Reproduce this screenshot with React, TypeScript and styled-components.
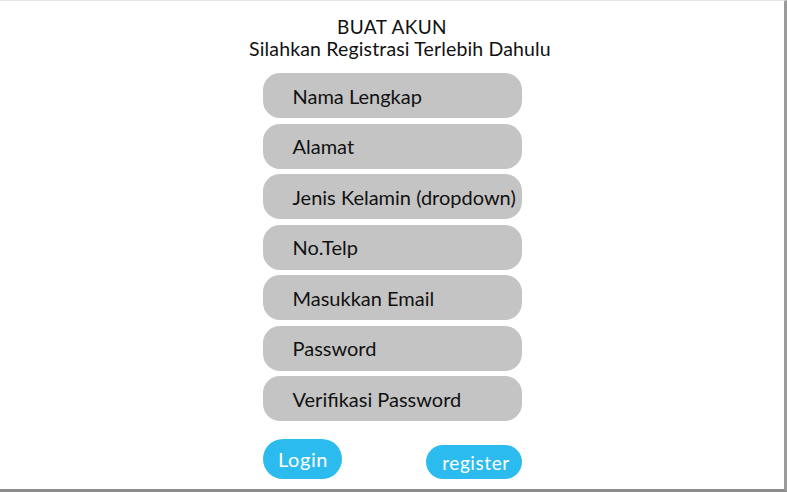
import styled, { createGlobalStyle } from 'styled-components';

const GlobalStyle = createGlobalStyle`
  html, body {
    margin: 0;
    padding: 0;
    background: #ffffff;
  }
  * {
    box-sizing: border-box;
  }
`;

const Frame = styled.div`
  width: 787px;
  height: 492px;
  background: #ffffff;
  border-top: 1px solid #e6e6e6;
  border-right: 3px solid #9b9b9b;
  border-bottom: 3px solid #8c8c8c;
  font-family: Lato, 'Noto Sans', sans-serif;
  color: #111111;
  display: flex;
  flex-direction: column;
  align-items: center;
  padding-top: 15px;
`;

const Header = styled.header`
  display: flex;
  flex-direction: column;
  align-items: center;
  line-height: 22px;
  margin-bottom: 13px;
`;

const Title = styled.h1`
  margin: 0;
  font-size: 19px;
  font-weight: 400;
  letter-spacing: 0.4px;
`;

const Subtitle = styled.p`
  margin: 0;
  padding-left: 16px;
  font-size: 19.5px;
  letter-spacing: 0.15px;
`;

const Form = styled.form`
  width: 259px;
  display: flex;
  flex-direction: column;
  gap: 5.5px;
`;

const Field = styled.div`
  height: 45px;
  border-radius: 17px;
  background: #c4c4c4;
  display: flex;
  align-items: center;
  padding-left: 30px;
  font-size: 20px;
  white-space: nowrap;
  overflow: hidden;
`;

const Actions = styled.div`
  display: flex;
  justify-content: space-between;
  align-items: flex-end;
  margin-top: 12.5px;
`;

const Pill = styled.button<{ $w: number; $h: number; $size: number; $shift?: number }>`
  width: ${({ $w }) => $w}px;
  height: ${({ $h }) => $h}px;
  border: none;
  border-radius: ${({ $h }) => $h / 2}px;
  background: #2bbbee;
  color: #ffffff;
  font-family: Lato, 'Noto Sans', sans-serif;
  font-size: ${({ $size }) => $size}px;
  letter-spacing: 0.6px;
  padding: 0 0 0 ${({ $shift = 0 }) => $shift}px;
  cursor: pointer;
`;

const fields = [
  'Nama Lengkap',
  'Alamat',
  'Jenis Kelamin (dropdown)',
  'No.Telp',
  'Masukkan Email',
  'Password',
  'Verifikasi Password',
];

export default function App() {
  return (
    <>
      <GlobalStyle />
      <Frame>
        <Header>
          <Title>BUAT AKUN</Title>
          <Subtitle>Silahkan Registrasi Terlebih Dahulu</Subtitle>
        </Header>
        <Form>
          {fields.map((f) => (
            <Field key={f}>{f}</Field>
          ))}
          <Actions>
            <Pill type="button" $w={79} $h={40} $size={20} $shift={2}>
              Login
            </Pill>
            <Pill type="button" $w={96} $h={34} $size={19} $shift={5}>
              register
            </Pill>
          </Actions>
        </Form>
      </Frame>
    </>
  );
}
